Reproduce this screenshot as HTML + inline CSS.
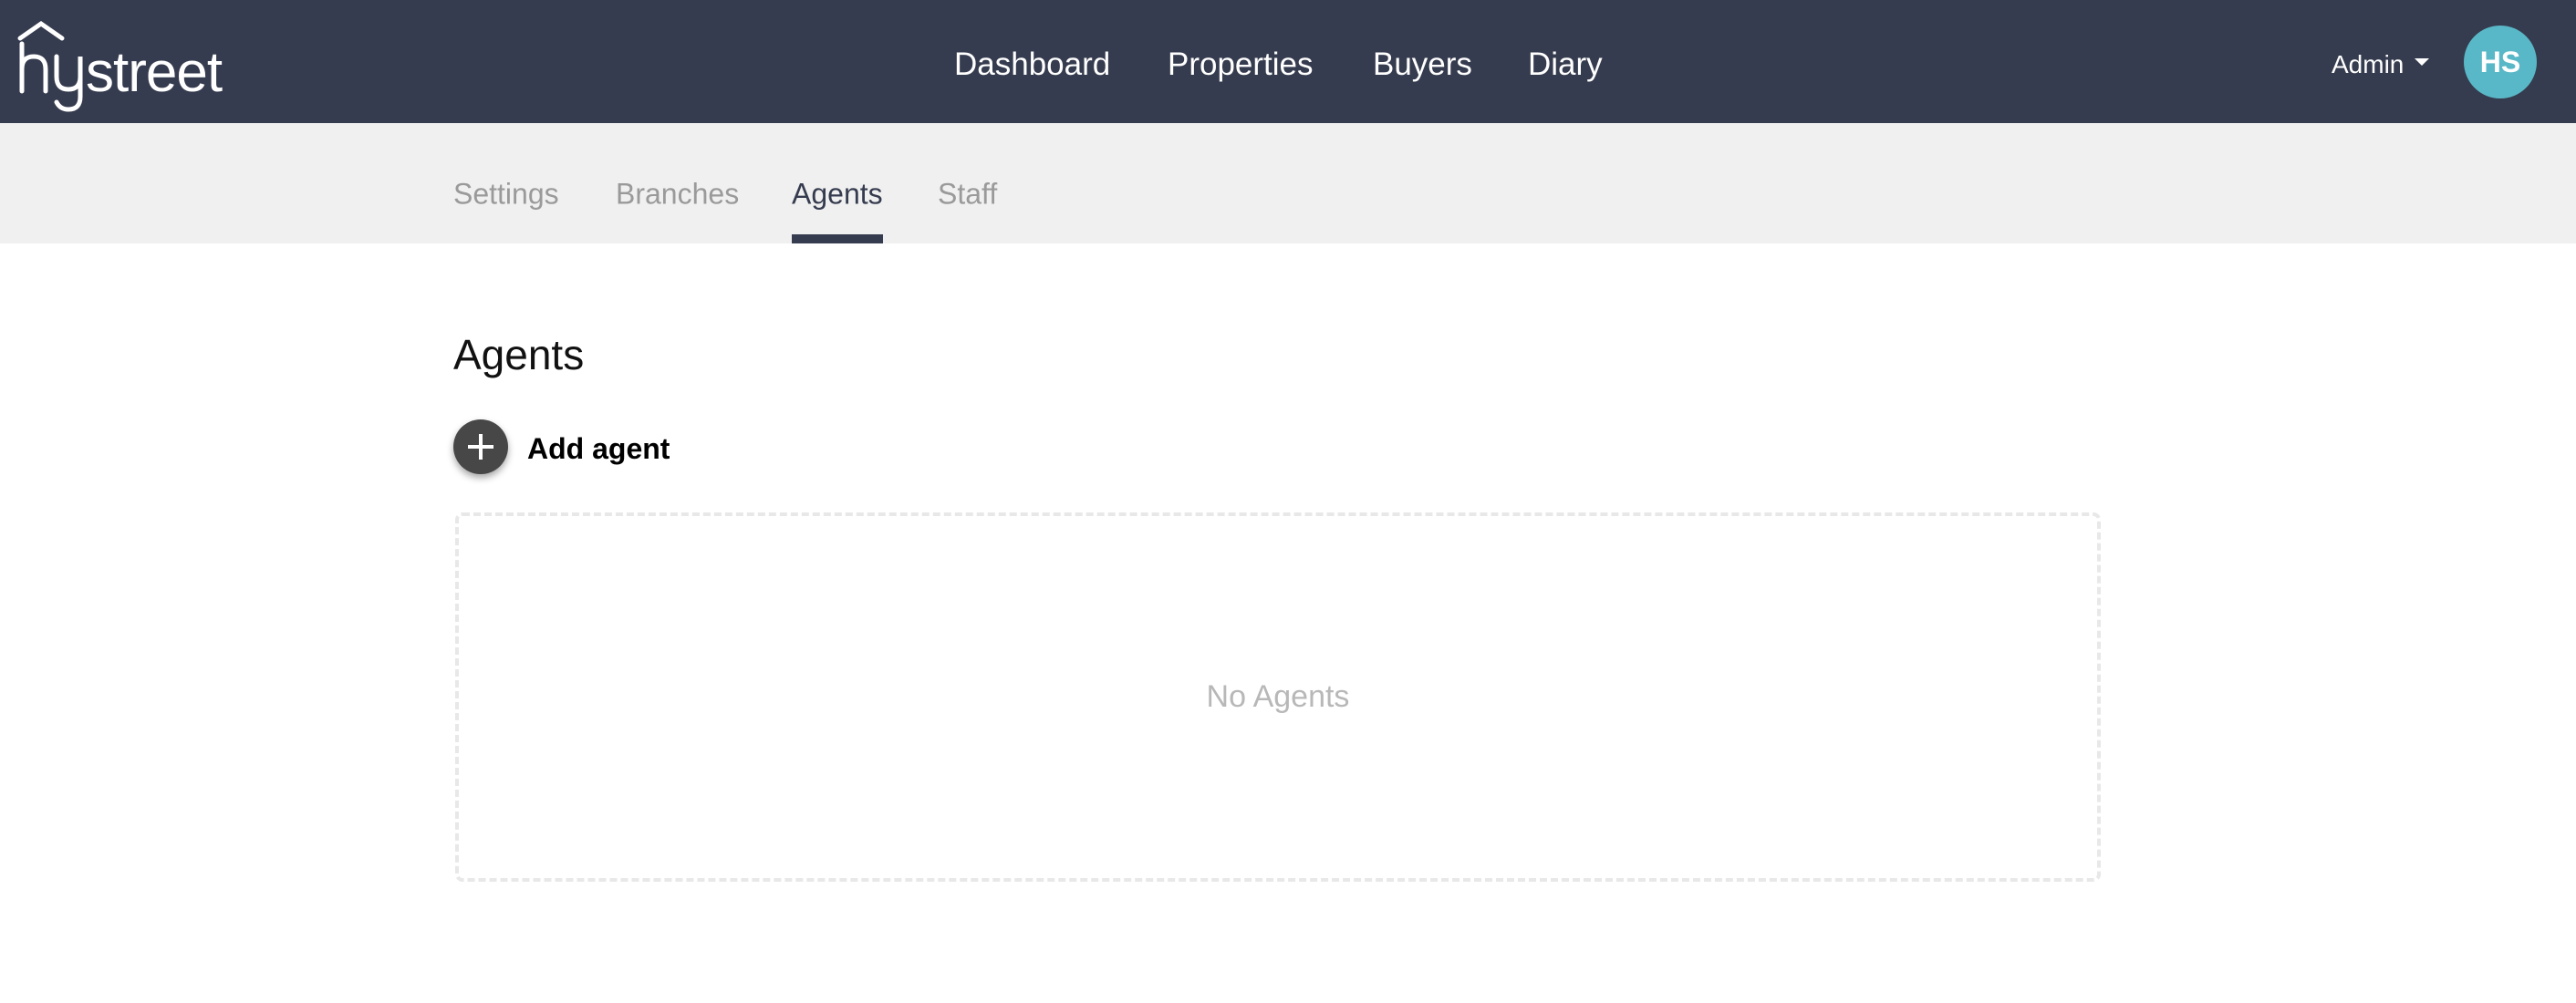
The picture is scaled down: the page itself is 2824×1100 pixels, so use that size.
<!DOCTYPE html>
<html><head><meta charset="utf-8"><style>
*{margin:0;padding:0;box-sizing:border-box}
body{width:2824px;height:1100px;background:#fff;font-family:"Liberation Sans",sans-serif;position:relative;overflow:hidden}
.hdr{position:absolute;left:0;top:0;width:2824px;height:135px;background:#363c4f}
.nav{position:absolute;top:71px;transform:translateY(-50%);color:#fff;font-size:35px}
.sub{position:absolute;left:0;top:135px;width:2824px;height:132px;background:#f0f0f0}
.tab{position:absolute;top:213px;transform:translateY(-50%);color:#9a9a9a;font-size:32px}
.abs{position:absolute}
</style></head><body>
<div class="hdr"></div>
<svg class="abs" style="left:18px;top:22px" width="240" height="110" viewBox="0 0 240 110">
<g fill="none" stroke="#fff" stroke-width="5" stroke-linecap="round">
<path d="M4 20 L27 4 L50 20"/>
<path d="M6 26 V78 M6 54 Q6 40 19 40 Q32 40 32 54 V78"/>
<path d="M44 40 V62 Q44 76 57 76 Q70 76 70 62 V40 V84 Q70 98 57 98 Q48 98 44 90"/>
</g>
<text x="76" y="78" fill="#fff" font-family="Liberation Sans" font-size="62" letter-spacing="-1">street</text>
</svg>
<div class="nav" style="left:1046px">Dashboard</div>
<div class="nav" style="left:1280px">Properties</div>
<div class="nav" style="left:1505px">Buyers</div>
<div class="nav" style="left:1675px">Diary</div>
<div class="nav" style="left:2556px;font-size:28px">Admin</div>
<div class="abs" style="left:2647px;top:64px;width:0;height:0;border-left:8px solid transparent;border-right:8px solid transparent;border-top:8px solid #fff"></div>
<div class="abs" style="left:2701px;top:28px;width:80px;height:80px;border-radius:50%;background:#59b8c7;color:#fff;font-size:32px;font-weight:bold;text-align:center;line-height:80px">HS</div>
<div class="sub"></div>
<div class="tab" style="left:497px">Settings</div>
<div class="tab" style="left:675px">Branches</div>
<div class="tab" style="left:868px;color:#363c4f">Agents</div>
<div class="tab" style="left:1028px">Staff</div>
<div class="abs" style="left:868px;top:257px;width:100px;height:10px;background:#363c4f"></div>
<div class="abs" style="left:497px;top:362px;font-size:46px;color:#111">Agents</div>
<div class="abs" style="left:497px;top:460px;width:60px;height:60px;border-radius:50%;background:#474747;box-shadow:0 4px 8px rgba(0,0,0,.35)"></div>
<div class="abs" style="left:513px;top:488px;width:28px;height:4px;background:#fff"></div>
<div class="abs" style="left:525px;top:476px;width:4px;height:28px;background:#fff"></div>
<div class="abs" style="left:578px;top:474px;font-size:32px;font-weight:bold;color:#000">Add agent</div>
<div class="abs" style="left:499px;top:562px;width:1804px;height:405px;border:4px dashed #e8e8e8;border-radius:8px"></div>
<div class="abs" style="left:0;width:2802px;top:745px;text-align:center;font-size:34px;color:#b8b8b8">No Agents</div>
</body></html>
